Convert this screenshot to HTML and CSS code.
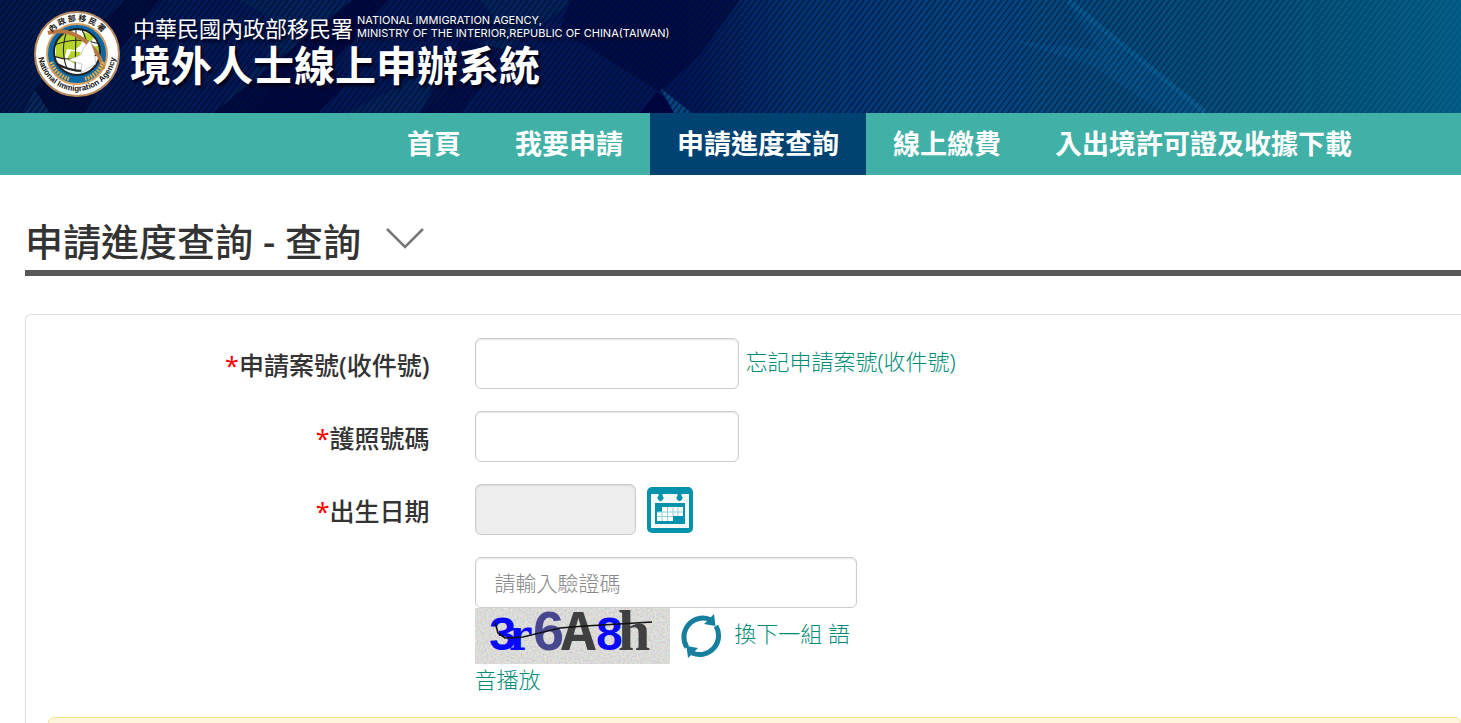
FILE: index.html
```html
<!DOCTYPE html>
<html lang="zh-Hant">
<head>
    <meta charset="UTF-8">
    <meta name="viewport" content="width=device-width, initial-scale=1.0">
    <title>境外人士線上申辦系統</title>
    <link rel="stylesheet" href="styles.css">
</head>
<body>
    <header class="header">
        <svg class="header-bg" viewBox="0 0 1461 113" preserveAspectRatio="xMidYMid slice" aria-hidden="true">
            <defs>
                <linearGradient id="sky" x1="0" y1="0" x2="1" y2="0">
                    <stop offset="0" stop-color="#001a50"/>
                    <stop offset="0.15" stop-color="#001858"/>
                    <stop offset="0.47" stop-color="#001658"/>
                    <stop offset="0.54" stop-color="#023070"/>
                    <stop offset="0.68" stop-color="#044480"/>
                    <stop offset="0.86" stop-color="#054e78"/>
                    <stop offset="1" stop-color="#035f88"/>
                </linearGradient>
                <pattern id="stripes" width="6" height="8" patternUnits="userSpaceOnUse">
                    <path d="M-1.5 10 L7.5 -2 M-4.5 6 L1.5 -2 M4.5 10 L10.5 2" stroke="#000a1c" stroke-width="1.2"/>
                </pattern>
                <linearGradient id="fade" x1="0" y1="0" x2="1" y2="0">
                    <stop offset="0" stop-color="#fff" stop-opacity="0.8"/>
                    <stop offset="0.7" stop-color="#fff" stop-opacity="0.65"/>
                    <stop offset="1" stop-color="#fff" stop-opacity="0.15"/>
                </linearGradient>
                <mask id="fade-mask"><rect width="1461" height="113" fill="url(#fade)"/></mask>
            </defs>
            <rect width="1461" height="113" fill="url(#sky)"/>
            <path d="M125 0 L160 0 L120 50 L85 113 L20 113 L35 90Z" fill="#000538" opacity="0.7"/>
            <path d="M35 90 L50 113 L22 113Z" fill="#06265e"/>
            <path d="M240 0 L352 0 L246 113 L215 113 L290 30Z" fill="#02255c" opacity="0.8"/>
            <path d="M352 0 L388 0 L330 66 L346 85 L318 113 L213 113Z" fill="#000540" opacity="0.8"/>
            <path d="M480 0 L575 0 L420 113 L348 113 L505 30Z" fill="#03265e" opacity="0.8"/>
            <path d="M460 40 L510 50 L460 113 L420 113Z" fill="#000640" opacity="0.6"/>
            <path d="M570 0 L740 0 L700 55 L660 92 L560 30Z" fill="#000640" opacity="0.6"/>
            <path d="M658 92 L680 113 L640 113Z" fill="#000344"/>
            <path d="M660 88 L692 113 L674 113Z" fill="#054480"/>
            <path d="M1065 0 L1206 113 L1165 113 L1090 65 L1010 40 L1100 50Z" fill="#0560a0" opacity="0.3"/>
            <path d="M1068 0 L1206 113" stroke="#0870a8" stroke-width="5" opacity="0.4"/>
            <rect width="1461" height="113" fill="url(#stripes)" mask="url(#fade-mask)"/>
        </svg>
        <a class="brand" href="#">
            <svg class="emblem" viewBox="0 0 86 86" role="img" aria-label="National Immigration Agency">
                <defs>
                    <path id="arc-top" d="M10 43 A33 33 0 0 1 76 43"/>
                    <path id="arc-bottom" d="M4 41 A39 39 0 0 0 82 41"/>
                    <clipPath id="globe"><circle cx="43" cy="41" r="23"/></clipPath>
                </defs>
                <circle cx="43" cy="43" r="42" fill="#fff" stroke="#b98a5c" stroke-width="2"/>
                <circle cx="43" cy="43" r="30" fill="#0a68a8" stroke="#d8a060" stroke-width="2"/>
                <circle cx="43" cy="41" r="23" fill="#fff"/>
                <g clip-path="url(#globe)">
                    <path d="M22 32 L28 23 L38 19 L42 26 L50 27 L46 35 L40 39 L33 38 L30 49 L22 46Z M37 40 L47 41 L41 53 L33 48Z M50 21 L60 25 L57 32 L49 29Z M59 36 L66 34 V46 L61 44Z" fill="#b5d42a"/>
                    <path d="M20 34 Q43 25 66 33 M19 45 Q42 53 66 43 M34 17 Q24 41 36 65 M47 17 Q60 40 49 65 M42 18 L41 65" fill="none" stroke="#222" stroke-width="1.1"/>
                    <path d="M24 53 Q38 60 48 59 L64 53 V66 H22Z" fill="#fff"/>
                    <path d="M23 53 Q36 60 49 60" fill="none" stroke="#222" stroke-width="2"/>
                </g>
                <circle cx="43" cy="41" r="23" fill="none" stroke="#222" stroke-width="2"/>
                <path d="M14 22 Q37 15 59 37 Q68 47 69 58" fill="none" stroke="#b97840" stroke-width="4"/>
                <path d="M34 49 L47 44 L49 38 L56 29 L60 40 L62 53 L56 56 L47 62 L48 53Z" fill="#fff" stroke="#999" stroke-width="0.5"/>
                <path d="M17 51 Q22 64 35 68 M69 51 Q64 64 51 68" fill="none" stroke="#e3ac4e" stroke-width="4" stroke-dasharray="2 1"/>
                <text class="emblem-zh"><textPath href="#arc-top" startOffset="50%" text-anchor="middle">內 政 部 移 民 署</textPath></text>
                <text class="emblem-en"><textPath href="#arc-bottom" startOffset="50%" text-anchor="middle">National Immigration Agency</textPath></text>
            </svg>
            <div class="brand-text">
                <div class="agency">
                    <span class="agency-zh">中華民國內政部移民署</span>
                    <span class="agency-en">NATIONAL IMMIGRATION AGENCY,<br>MINISTRY OF THE INTERIOR,REPUBLIC OF CHINA(TAIWAN)</span>
                </div>
                <div class="system-name">境外人士線上申辦系統</div>
            </div>
        </a>
    </header>

    <nav class="main-nav">
        <ul>
            <li><a href="#">首頁</a></li>
            <li><a href="#">我要申請</a></li>
            <li><a href="#" class="active">申請進度查詢</a></li>
            <li><a href="#">線上繳費</a></li>
            <li><a href="#">入出境許可證及收據下載</a></li>
        </ul>
    </nav>

    <main class="container">
        <h1 class="page-title">
            <span>申請進度查詢 - 查詢</span>
            <svg class="chevron" viewBox="0 0 40 24" aria-hidden="true">
                <path d="M2 2 L20 20 L38 2" fill="none" stroke="#777" stroke-width="2.5"/>
            </svg>
        </h1>

        <form class="search-box">
            <div class="form-row">
                <label for="case-no"><span class="required">*</span>申請案號(收件號)</label>
                <div class="field">
                    <input type="text" id="case-no" class="text-input">
                    <a href="#" class="forgot">忘記申請案號(收件號)</a>
                </div>
            </div>
            <div class="form-row">
                <label for="passport-no"><span class="required">*</span>護照號碼</label>
                <div class="field">
                    <input type="text" id="passport-no" class="text-input">
                </div>
            </div>
            <div class="form-row">
                <label for="birthday"><span class="required">*</span>出生日期</label>
                <div class="field">
                    <input type="text" id="birthday" class="text-input date-input" readonly>
                    <button type="button" class="calendar-btn" aria-label="選擇日期">
                        <svg viewBox="0 0 46 46" aria-hidden="true">
                            <rect width="46" height="46" rx="5" fill="#0592ac"/>
                            <path d="M4 7 H42 V41 H4Z" fill="#f5fbfd"/>
                            <path d="M8 16 H38 V37 H8Z" fill="#0592ac"/>
                            <path d="M12 6 H15 V9 A2.5 2.5 0 1 1 12 9Z M31 6 H34 V9 A2.5 2.5 0 1 1 31 9Z" fill="#0592ac" stroke="#0592ac"/>
                            <path d="M15 20 H36 V29 H26 V34 H10 V25 H15Z" fill="#fff"/>
                            <path d="M10 25 H36 M10 29.500 H26 M15 25 V34 M20.500 20 V34 M26 20 V29 M31 20 V29" stroke="#8fd0db" stroke-width="1"/>
                        </svg>
                    </button>
                </div>
            </div>
            <div class="form-row">
                <div class="field captcha">
                    <input type="text" class="text-input captcha-input" placeholder="請輸入驗證碼" aria-label="驗證碼">
                    <div class="captcha-tools">
                        <svg class="captcha-image" viewBox="0 0 195 56" role="img" aria-label="驗證碼圖片">
                            <defs>
                                <filter id="noise" x="0" y="0" width="1" height="1" color-interpolation-filters="sRGB">
                                    <feTurbulence type="fractalNoise" baseFrequency="0.5" numOctaves="2" seed="4"/>
                                    <feColorMatrix type="matrix" values="0.25 0 0 0 0.73  0 0.25 0 0 0.73  0 0 0.25 0 0.72  0 0 0 0 1"/>
                                </filter>
                            </defs>
                            <rect width="195" height="56" fill="#d9d9d9" filter="url(#noise)"/>
                            <text x="58" y="42" font-size="56" class="code-sans" fill="#484890">6</text>
                            <text x="86" y="42" font-size="58" class="code-mono" fill="#404040">A</text>
                            <text x="13" y="42" font-size="48" class="code-mono code-blue">3</text>
                            <text x="34" y="42" font-size="42" class="code-serif code-blue">r</text>
                            <text x="120" y="42" font-size="48" class="code-mono code-blue">8</text>
                            <text x="143" y="42" font-size="58" class="code-liberation" fill="#404040">h</text>
                            <path d="M20 14 L23 25 L30 30 L48 29 L85 20 L110 18 L177 14" fill="none" stroke="#111" stroke-width="1.6"/>
                        </svg>
                        <a href="#" class="reload">
                            <svg class="reload-icon" viewBox="0 0 44 44" aria-hidden="true">
                                <path d="M8 33.500 A19 19 0 0 1 31 5.500" fill="none" stroke="#177f9e" stroke-width="5"/>
                                <path d="M37 12 A19 19 0 0 1 13 39" fill="none" stroke="#177f9e" stroke-width="5"/>
                                <path d="M35 0 L36.500 12 L25 10Z M9 44 L7.500 32 L19 34Z" fill="#177f9e"/>
                            </svg>換下一組</a>
                        <a href="#">語音播放</a>
                    </div>
                </div>
            </div>
            <div class="notice"></div>
        </form>
    </main>
</body>
</html>
```
FILE: styles.css
```css
* {
    box-sizing: border-box;
}
body {
    margin: 0;
    background-color: #fff;
    color: #333;
    font-family: "Noto Sans", "Noto Sans CJK TC", sans-serif;
    font-size: 22px;
}
a {
    text-decoration: none;
}

/* Header */
.header {
    position: relative;
    height: 113px;
    background-color: #00114c;
}
.header-bg {
    position: absolute;
    top: 0;
    left: 0;
    width: 100%;
    height: 100%;
}
.brand {
    position: relative;
    display: flex;
    align-items: flex-start;
    gap: 10px;
    padding: 11px 0 0 34px;
    color: #fff;
}
.emblem {
    width: 86px;
    height: 86px;
    flex: none;
}
.emblem-zh {
    font-family: "Noto Sans CJK TC", sans-serif;
    font-size: 8px;
    font-weight: bold;
    fill: #222;
}
.emblem-en {
    font-family: "Liberation Sans", sans-serif;
    font-size: 8px;
    font-weight: bold;
    fill: #111;
}
.brand-text {
    padding-top: 3px;
    text-shadow: 2px 3px 3px #000018;
}
.agency {
    display: flex;
    gap: 4px;
    padding-left: 3px;
}
.agency-zh {
    font-size: 22px;
    line-height: 28px;
}
.agency-en {
    font-family: Inter, sans-serif;
    font-size: 11px;
    line-height: 13px;
}
.system-name {
    font-size: 41px;
    line-height: 46px;
    font-weight: bold;
}

/* Navigation */
.main-nav {
    background-color: #41b0a6;
}
.main-nav ul {
    display: flex;
    justify-content: flex-end;
    list-style: none;
    margin: 0;
    padding: 0 82px 0 0;
}
.main-nav a {
    display: block;
    padding: 0 27px;
    color: #fff;
    font-size: 27px;
    font-weight: bold;
    line-height: 62px;
}
.main-nav .active {
    background-color: #004373;
}

/* Page title */
.container {
    padding: 38px 0 0 25px;
}
.page-title {
    display: flex;
    align-items: center;
    gap: 24px;
    margin: 0 0 38px;
    border-bottom: 6px solid #595757;
    font-size: 38px;
    font-weight: 500;
    line-height: 57px;
}
.chevron {
    width: 40px;
    height: 24px;
    margin-bottom: 6px;
}

/* Search form */
.search-box {
    display: flex;
    flex-direction: column;
    gap: 22px;
    padding: 23px 0 0 22px;
    border: 1px solid #ddd;
    border-width: 1px 0 0 1px;
    border-radius: 6px 0 0 0;
}
.form-row {
    display: grid;
    grid-template-columns: 27% 1fr;
    column-gap: 45px;
    align-items: center;
}
.form-row label {
    font-size: 25px;
    font-weight: 500;
    text-align: right;
}
.required {
    color: #f00;
    font-weight: 400;
}
.field {
    grid-column: 2;
    display: flex;
    align-items: center;
}
.text-input {
    width: 264px;
    height: 51px;
    padding: 0 19px;
    border: 1px solid #ccc;
    border-radius: 6px;
    box-shadow: inset 0 1px 2px rgba(0,0,0,0.1);
    font-family: inherit;
    font-size: 21px;
    font-weight: 300;
}
.text-input::placeholder {
    color: #888;
    opacity: 1;
}
.field a {
    color: #008c76;
    font-weight: 300;
}
.forgot {
    margin-left: 7px;
    padding-bottom: 8px;
}
.date-input {
    width: 161px;
    background-color: #eee;
}
.calendar-btn {
    width: 46px;
    height: 46px;
    margin-left: 11px;
    padding: 0;
    border: none;
    background: none;
    cursor: pointer;
}
.calendar-btn svg {
    display: block;
}
.captcha {
    display: block;
    max-width: 382px;
}
.captcha-input {
    display: block;
    width: 100%;
}
.captcha-tools {
    line-height: 31px;
}
.captcha-image {
    width: 195px;
    height: 56px;
    vertical-align: middle;
}
.code-mono {
    font-family: "Liberation Mono", monospace;
    font-weight: bold;
}
.code-sans {
    font-family: "Liberation Sans", sans-serif;
    font-weight: bold;
}
.code-serif {
    font-family: "DejaVu Serif", serif;
    font-weight: bold;
}
.code-liberation {
    font-family: "Liberation Serif", serif;
    font-weight: bold;
}
.code-blue {
    fill: #0808fa;
}
.reload-icon {
    width: 44px;
    height: 44px;
    margin: 0 11px 0 4px;
    vertical-align: middle;
}
.notice {
    height: 60px;
    border: 1px solid #f3e28e;
    border-radius: 6px;
    background-color: #fff5dc;
}
```
